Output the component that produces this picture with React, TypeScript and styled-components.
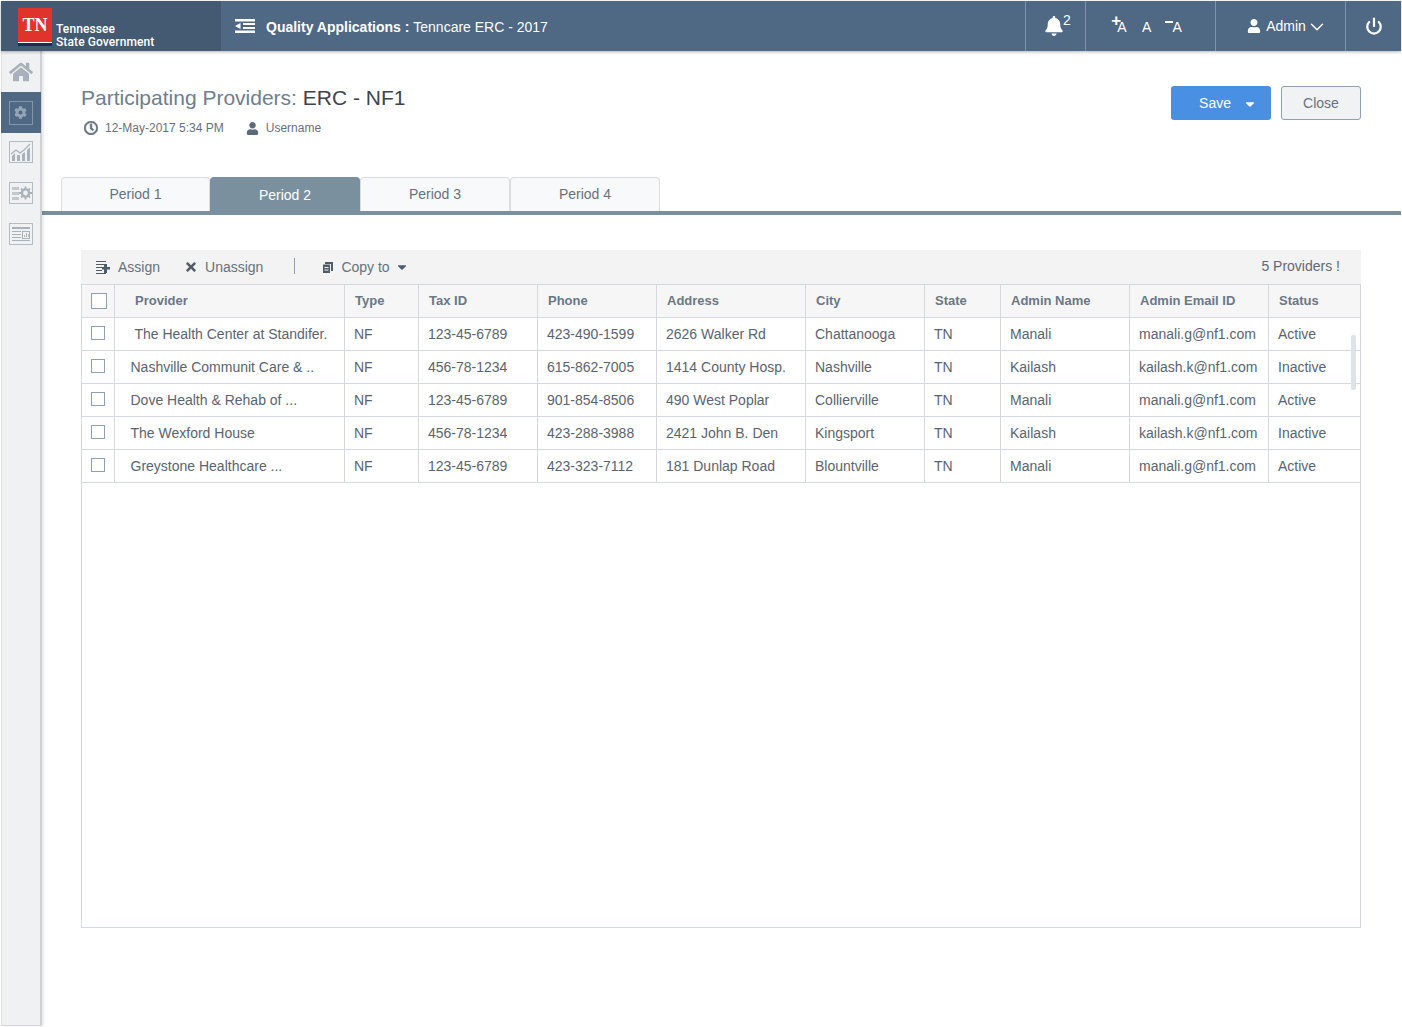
import React from 'react';
import styled, { createGlobalStyle } from 'styled-components';
import { FaHome, FaBell, FaUser, FaRegClock, FaCog, FaCaretDown, FaTimes } from 'react-icons/fa';
import { FiChevronDown, FiPower } from 'react-icons/fi';

const GlobalStyle = createGlobalStyle`
  html, body { margin: 0; padding: 0; background: #fff; }
  body { font-family: 'Liberation Sans', Arial, sans-serif; color: #5a6470; }
  * { box-sizing: border-box; }
`;

const Shell = styled.div`
  width: 1402px;
  height: 1027px;
  padding: 1px;
  display: flex;
  flex-direction: column;
  overflow: hidden;
`;

const Header = styled.header`
  height: 50px;
  flex: none;
  display: flex;
  align-items: stretch;
  background: #4f6883;
  color: #fff;
  box-shadow: 0 1px 3px rgba(0, 0, 0, 0.3);
  position: relative;
  z-index: 2;
`;

const Brand = styled.div`
  width: 220px;
  background: #435a72;
  display: flex;
  padding: 7px 0 0 17px;
`;

const LogoBlock = styled.div`
  width: 34px;
  height: 38px;
  background: #e0332a;
  border-bottom: 3px solid #1c2c55;
  box-shadow: inset 0 -1px 0 #fff;
  color: #fff;
  font-family: 'Liberation Serif', serif;
  font-weight: 700;
  font-size: 18px;
  line-height: 22px;
  padding-top: 6px;
  text-align: center;
`;

const BrandName = styled.div`
  margin: 15px 0 0 4px;
  font-family: 'Roboto', sans-serif;
  font-weight: 500;
  font-size: 12px;
  line-height: 13px;
  letter-spacing: 0.1px;
  white-space: nowrap;
`;

const AppTitle = styled.div`
  flex: 1;
  display: flex;
  align-items: center;
  padding: 2px 0 0 14px;
  font-size: 14px;
`;

const MenuGlyph = styled.svg`
  width: 20px;
  height: 14px;
  margin: -2px 11px 0 0;
`;

const HeaderCell = styled.div<{ $w: number; $shift?: number }>`
  width: ${(p) => p.$w}px;
  border-left: 1px solid #7e93a8;
  display: flex;
  align-items: center;
  justify-content: center;
  font-size: 14px;
  padding-left: ${(p) => Math.max(p.$shift ?? 0, 0)}px;
  padding-right: ${(p) => Math.max(-(p.$shift ?? 0), 0)}px;
  position: relative;
`;

const Sup = styled.span`
  font-size: 14px;
  position: absolute;
  left: 37px;
  top: 11px;
`;

const SizeRow = styled.div`
  display: flex;
  align-items: center;
  padding-top: 1px;
`;

const SizeA = styled.span<{ $gap?: number }>`
  position: relative;
  font-size: 14px;
  margin-left: ${(p) => p.$gap ?? 0}px;
  &[data-mark='+']::before {
    content: '+';
    position: absolute;
    left: -6px;
    top: -7px;
    font-size: 17px;
    font-weight: 700;
    line-height: 17px;
  }
  &[data-mark='-']::before {
    content: '';
    position: absolute;
    left: -7px;
    top: 2px;
    width: 8px;
    height: 2px;
    background: #fff;
  }
`;

const AdminName = styled.span`
  margin-left: 5px;
`;

const AdminCaret = styled(FiChevronDown)`
  margin: 1px -4px 0 0;
`;

const Body = styled.div`
  flex: 1;
  display: flex;
  min-height: 0;
`;

const Sidebar = styled.nav`
  width: 41px;
  flex: none;
  background: #f0f1f3;
  border-left: 1px solid #dcdee0;
  border-bottom: 1px solid #d5d7da;
  border-right: 2px solid #cfd1d4;
  box-shadow: 2px 0 2px rgba(0, 0, 0, 0.08);
  display: flex;
  flex-direction: column;
  position: relative;
  z-index: 1;
`;

const SideItem = styled.div<{ $active?: boolean; $lift?: boolean }>`
  height: 41px;
  flex: none;
  display: flex;
  align-items: center;
  justify-content: center;
  color: #a9b2ba;
  background: ${(p) => (p.$active ? '#4f6883' : 'transparent')};
  margin: 0 -1px 0 -1px;
  padding: 0 1px ${(p) => (p.$lift ? '4px' : '0')} 0;
`;

const SideBox = styled.div`
  width: 24px;
  height: 24px;
  border: 1px solid #8296aa;
  display: flex;
  align-items: center;
  justify-content: center;
  color: #94a5b5;
  font-size: 13px;
`;

const Main = styled.main`
  flex: 1;
  min-width: 0;
  margin-left: -1px;
  display: flex;
  flex-direction: column;
`;

const TitleRow = styled.div`
  display: flex;
  justify-content: space-between;
  padding: 35px 40px 0 40px;
  height: 126px;
`;

const Title = styled.h1`
  margin: -1px 0 0;
  font-size: 21px;
  font-weight: 400;
  line-height: 26px;
  color: #6d7e8e;
  span { color: #3f4449; }
`;

const Meta = styled.div`
  display: flex;
  align-items: center;
  margin: 10px 0 0 3px;
  font-size: 12px;
  color: #66727e;
  svg { color: #5c6b7a; }
`;

const MetaItem = styled.span`
  display: flex;
  align-items: center;
  gap: 7px;
  margin-right: 22px;
`;

const ClockIcon = styled(FaRegClock)`
  stroke: currentColor;
  stroke-width: 24px;
`;

const Actions = styled.div`
  display: flex;
  gap: 10px;
`;

const SaveButton = styled.button`
  width: 100px;
  height: 34px;
  background: #4a90e2;
  border: 0;
  border-radius: 3px;
  color: #fff;
  font: 14px 'Liberation Sans', sans-serif;
  display: flex;
  align-items: center;
  justify-content: flex-end;
  gap: 12px;
  padding-right: 14px;
  svg { margin-top: 2px; }
`;

const CloseButton = styled.button`
  width: 80px;
  height: 34px;
  background: #f0f2f4;
  border: 1px solid #8ea0b2;
  border-radius: 3px;
  color: #66727e;
  font: 14px 'Liberation Sans', sans-serif;
`;

const Tabs = styled.div`
  display: flex;
  padding-left: 20px;
  border-bottom: 4px solid #7a909f;
  height: 38px;
`;

const Tab = styled.div<{ $active?: boolean }>`
  width: 150px;
  height: 34px;
  background: ${(p) => (p.$active ? '#7a909f' : '#f8f9fa')};
  color: ${(p) => (p.$active ? '#fff' : '#66727e')};
  border: 1px solid ${(p) => (p.$active ? '#7a909f' : '#d9dee2')};
  border-bottom: 0;
  border-radius: 4px 4px 0 0;
  display: flex;
  align-items: center;
  justify-content: center;
  font-size: 14px;
  padding-bottom: ${(p) => (p.$active ? '0' : '2px')};
  &:first-child { width: 149px; }
`;

const Content = styled.section`
  margin: 35px 40px 0 40px;
`;

const Toolbar = styled.div`
  height: 34px;
  background: #f3f3f3;
  display: flex;
  align-items: center;
  padding: 0 21px 2px 15px;
  font-size: 14px;
  color: #66727e;
`;

const ToolAction = styled.span<{ $gap?: number }>`
  display: flex;
  align-items: center;
  gap: 7px;
  margin-right: ${(p) => p.$gap ?? 25}px;
  padding-top: 2px;
  svg { color: #4f5d6b; }
`;

const ToolDivider = styled.span`
  width: 1px;
  height: 16px;
  background: #8ea0b2;
  margin: 0 28px 0 6px;
`;

const CopyLabel = styled.span`
  margin-left: 1px;
`;

const CopyCaret = styled(FaCaretDown)`
  margin-left: -2px;
`;

const Count = styled.span`
  margin-left: auto;
  color: #5f6a75;
`;

const TableFrame = styled.div`
  height: 644px;
  border: 1px solid #d5d9dd;
  position: relative;
`;

const Grid = styled.table`
  width: 1278px;
  table-layout: fixed;
  border-collapse: collapse;
  font-size: 14px;
  th, td {
    border: 1px solid #d5d9dd;
    height: 33px;
    white-space: nowrap;
    overflow: hidden;
  }
  thead th { height: 32px; }
  tr > :first-child { border-left: 0; }
  tr > :last-child { border-right: 0; }
  thead tr > * { border-top: 0; }
`;

const Th = styled.th<{ $lead?: boolean }>`
  background: #f6f6f6;
  font-size: 13px;
  font-weight: 700;
  color: #69788a;
  text-align: left;
  padding: 0 0 0 ${(p) => (p.$lead ? '20.5px' : '10.5px')};
`;

const Td = styled.td`
  padding: 0 0 0 9.5px;
  color: #5a6470;
`;

const NameTd = styled(Td)`
  padding-left: 16px;
`;

const CheckTd = styled.td`
  padding: 0 0 1px 9px;
  line-height: 0;
`;

const CheckTh = styled.th`
  padding: 0 0 0 9px;
  line-height: 0;
  text-align: left;
  background: #f6f6f6;
`;

const Box = styled.span<{ $size: number }>`
  display: inline-block;
  width: ${(p) => p.$size}px;
  height: ${(p) => p.$size}px;
  background: #fff;
  border: 1px solid #8ea0b2;
`;

const ScrollThumb = styled.div`
  position: absolute;
  right: 4px;
  top: 50px;
  width: 5px;
  height: 55px;
  border-radius: 2px;
  background: #dde3e8;
`;

const columns = [32, 230, 74, 119, 119, 149, 119, 76, 129, 139, 92];
const heads = ['Provider', 'Type', 'Tax ID', 'Phone', 'Address', 'City', 'State', 'Admin Name', 'Admin Email ID', 'Status'];

const rows = [
  ['\u00a0The Health Center at Standifer.', 'NF', '123-45-6789', '423-490-1599', '2626 Walker Rd', 'Chattanooga', 'TN', 'Manali', 'manali.g@nf1.com', 'Active'],
  ['Nashville Communit Care & ..', 'NF', '456-78-1234', '615-862-7005', '1414 County Hosp.', 'Nashville', 'TN', 'Kailash', 'kailash.k@nf1.com', 'Inactive'],
  ['Dove Health & Rehab of ...', 'NF', '123-45-6789', '901-854-8506', '490 West Poplar', 'Collierville', 'TN', 'Manali', 'manali.g@nf1.com', 'Active'],
  ['The Wexford House', 'NF', '456-78-1234', '423-288-3988', '2421 John B. Den', 'Kingsport', 'TN', 'Kailash', 'kailash.k@nf1.com', 'Inactive'],
  ['Greystone Healthcare ...', 'NF', '123-45-6789', '423-323-7112', '181 Dunlap Road', 'Blountville', 'TN', 'Manali', 'manali.g@nf1.com', 'Active'],
];

const ChartGlyph = () => (
  <svg width="24" height="22" viewBox="0 0 24 22" fill="none">
    <rect x="0.5" y="0.5" width="23" height="21" stroke="#b4bcc3" />
    <path d="M2 13l5-4 4 3 4-3 6-6" stroke="#a9b2ba" strokeWidth="1.2" />
    <path d="M3 20v-5l3-3v8zM8 20v-6h3v6zM13 20v-7l3-2v9zM18 20V9l3-3v14z" fill="#a9b2ba" />
  </svg>
);

const SettingsGlyph = () => (
  <svg width="24" height="22" viewBox="0 0 24 22" fill="none">
    <rect x="0.5" y="0.5" width="23" height="21" stroke="#b4bcc3" />
    <path d="M3 5h7v3H3zM3 10h7v3H3zM3 15h7v3H3z" fill="#c2c8ce" />
    <circle cx="16.5" cy="11" r="3.6" stroke="#a9b2ba" strokeWidth="2.4" />
    <path d="M16.5 4.5v2.5M16.5 15v2.5M10 11h2.5M20.5 11H23M12 6.5l1.8 1.8M19.2 13.7l1.8 1.8M21 6.5l-1.8 1.8M13.8 13.7L12 15.5" stroke="#a9b2ba" strokeWidth="1.8" />
  </svg>
);

const ReportGlyph = () => (
  <svg width="24" height="22" viewBox="0 0 24 22" fill="none">
    <rect x="0.5" y="0.5" width="23" height="21" stroke="#b4bcc3" />
    <path d="M3 4h18v2H3zM3 8h9v1H3zM3 11h9v1H3zM3 14h9v1H3zM3 17h18v1H3z" fill="#a9b2ba" />
    <rect x="13.5" y="8.5" width="7" height="7" stroke="#a9b2ba" />
    <path d="M15 14v-2h1v2zM17 14v-4h1v4zM19 14v-3h.8v3z" fill="#a9b2ba" />
  </svg>
);

const AssignGlyph = () => (
  <svg width="15" height="13" viewBox="0 0 15 13" fill="currentColor">
    <path d="M0 0h10v1H0zM0 3h10v1H0zM0 6h6v1H0zM0 9h6v1H0zM0 12h10v1H0z" />
    <path d="M8 3h3v3h3v2.600h-3V12H8V8.600H6V6h2z" />
  </svg>
);

const CopyGlyph = () => (
  <svg width="10" height="11" viewBox="0 0 10 11" fill="currentColor">
    <path d="M2 0h8v9H8V2H2z" />
    <path d="M0 2.500h7V11H0zM1.500 5v1h4V5zM1.500 7.500v1h4v-1z" fillRule="evenodd" />
  </svg>
);

const App: React.FC = () => (
  <>
    <GlobalStyle />
    <Shell>
      <Header>
        <Brand>
          <LogoBlock>TN</LogoBlock>
          <BrandName>
            Tennessee
            <br />
            State Government
          </BrandName>
        </Brand>
        <AppTitle>
          <MenuGlyph viewBox="0 0 20 14" fill="#fff">
            <path d="M0 0h20v2.500H0zM8 4h12v2H8zM8 8h12v2H8zM0 11.500h20V14H0zM5.500 4v6L0 7z" />
          </MenuGlyph>
          <b>Quality Applications :</b>&nbsp;Tenncare ERC - 2017
        </AppTitle>
        <HeaderCell $w={60} $shift={-3}>
          <FaBell size={20} />
          <Sup>2</Sup>
        </HeaderCell>
        <HeaderCell $w={130} $shift={-2}>
          <SizeRow>
            <SizeA data-mark="+">A</SizeA>
            <SizeA $gap={15.5}>A</SizeA>
            <SizeA $gap={21} data-mark="-">A</SizeA>
          </SizeRow>
        </HeaderCell>
        <HeaderCell $w={130} $shift={10}>
          <FaUser size={14} />
          <AdminName>Admin</AdminName>
          <AdminCaret size={22} strokeWidth={1.6} />
        </HeaderCell>
        <HeaderCell $w={56}>
          <FiPower size={18} strokeWidth={3} />
        </HeaderCell>
      </Header>
      <Body>
        <Sidebar>
          <SideItem>
            <FaHome size={24} />
          </SideItem>
          <SideItem $active>
            <SideBox>
              <FaCog />
            </SideBox>
          </SideItem>
          <SideItem $lift>
            <ChartGlyph />
          </SideItem>
          <SideItem $lift>
            <SettingsGlyph />
          </SideItem>
          <SideItem $lift>
            <ReportGlyph />
          </SideItem>
        </Sidebar>
        <Main>
          <TitleRow>
            <div>
              <Title>
                Participating Providers: <span>ERC - NF1</span>
              </Title>
              <Meta>
                <MetaItem>
                  <ClockIcon size={14} />
                  12-May-2017 5:34 PM
                </MetaItem>
                <MetaItem>
                  <FaUser size={13} />
                  Username
                </MetaItem>
              </Meta>
            </div>
            <Actions>
              <SaveButton>
                Save
                <FaCaretDown size={14} />
              </SaveButton>
              <CloseButton>Close</CloseButton>
            </Actions>
          </TitleRow>
          <Tabs>
            <Tab>Period 1</Tab>
            <Tab $active>Period 2</Tab>
            <Tab>Period 3</Tab>
            <Tab>Period 4</Tab>
          </Tabs>
          <Content>
            <Toolbar>
              <ToolAction $gap={24}>
                <AssignGlyph />
                Assign
              </ToolAction>
              <ToolAction>
                <FaTimes size={14} />
                Unassign
              </ToolAction>
              <ToolDivider />
              <ToolAction>
                <CopyGlyph />
                <CopyLabel>Copy to</CopyLabel>
                <CopyCaret size={14} />
              </ToolAction>
              <Count>5 Providers !</Count>
            </Toolbar>
            <TableFrame>
              <Grid>
                <colgroup>
                  {columns.map((w, i) => (
                    <col key={i} width={w} />
                  ))}
                </colgroup>
                <thead>
                  <tr>
                    <CheckTh>
                      <Box $size={16} />
                    </CheckTh>
                    {heads.map((h, i) => (
                      <Th key={h} $lead={i === 0}>
                        {h}
                      </Th>
                    ))}
                  </tr>
                </thead>
                <tbody>
                  {rows.map((r) => (
                    <tr key={r[0]}>
                      <CheckTd>
                        <Box $size={14} />
                      </CheckTd>
                      <NameTd>{r[0]}</NameTd>
                      {r.slice(1).map((c, i) => (
                        <Td key={i}>{c}</Td>
                      ))}
                    </tr>
                  ))}
                </tbody>
              </Grid>
              <ScrollThumb />
            </TableFrame>
          </Content>
        </Main>
      </Body>
    </Shell>
  </>
);

export default App;
